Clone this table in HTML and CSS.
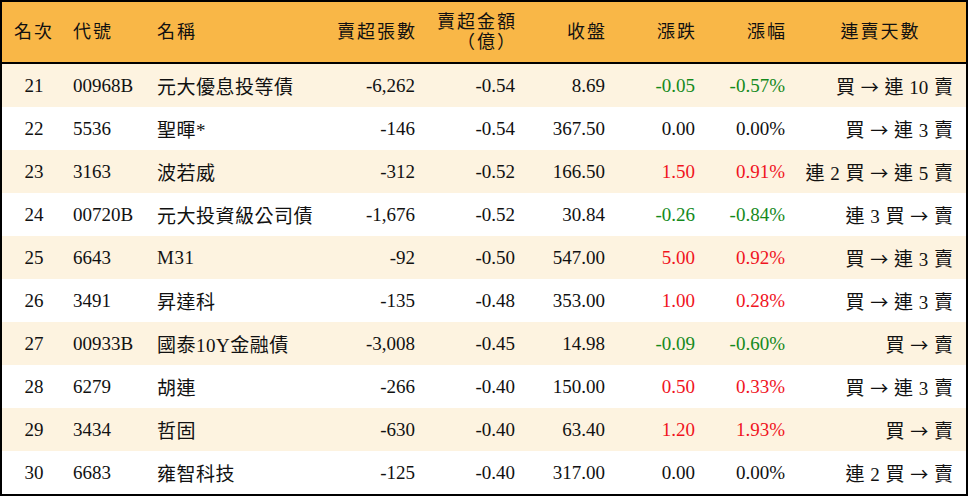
FILE: index.html
```html
<!DOCTYPE html>
<html lang="zh-Hant">
<head>
<meta charset="utf-8">
<link rel="stylesheet" href="styles.css">
</head>
<body>
<table class="tbl">
<colgroup>
<col class="c1"><col class="c2"><col class="c3"><col class="c4"><col class="c5"><col class="c6"><col class="c7"><col class="c8"><col class="c9">
</colgroup>
<thead>
<tr>
<th class="ctr">名次</th><th class="lft">代號</th><th class="lft">名稱</th><th class="rgt">賣超張數</th><th class="rgt">賣超金額<br>（億）</th><th class="rgt">收盤</th><th class="rgt">漲跌</th><th class="rgt">漲幅</th><th class="ctr">連賣天數</th>
</tr>
</thead>
<tbody>
<tr class="odd"><td class="ctr">21</td><td class="lft">00968B</td><td class="lft name">元大優息投等債</td><td class="rgt">-6,262</td><td class="rgt">-0.54</td><td class="rgt">8.69</td><td class="rgt dn">-0.05</td><td class="rgt dn">-0.57%</td><td class="rgt days">買 <span class="arr">→</span> 連 10 賣</td></tr>
<tr><td class="ctr">22</td><td class="lft">5536</td><td class="lft name">聖暉*</td><td class="rgt">-146</td><td class="rgt">-0.54</td><td class="rgt">367.50</td><td class="rgt">0.00</td><td class="rgt">0.00%</td><td class="rgt days">買 <span class="arr">→</span> 連 3 賣</td></tr>
<tr class="odd"><td class="ctr">23</td><td class="lft">3163</td><td class="lft name">波若威</td><td class="rgt">-312</td><td class="rgt">-0.52</td><td class="rgt">166.50</td><td class="rgt up">1.50</td><td class="rgt up">0.91%</td><td class="rgt days">連 2 買 <span class="arr">→</span> 連 5 賣</td></tr>
<tr><td class="ctr">24</td><td class="lft">00720B</td><td class="lft name">元大投資級公司債</td><td class="rgt">-1,676</td><td class="rgt">-0.52</td><td class="rgt">30.84</td><td class="rgt dn">-0.26</td><td class="rgt dn">-0.84%</td><td class="rgt days">連 3 買 <span class="arr">→</span> 賣</td></tr>
<tr class="odd"><td class="ctr">25</td><td class="lft">6643</td><td class="lft name">M31</td><td class="rgt">-92</td><td class="rgt">-0.50</td><td class="rgt">547.00</td><td class="rgt up">5.00</td><td class="rgt up">0.92%</td><td class="rgt days">買 <span class="arr">→</span> 連 3 賣</td></tr>
<tr><td class="ctr">26</td><td class="lft">3491</td><td class="lft name">昇達科</td><td class="rgt">-135</td><td class="rgt">-0.48</td><td class="rgt">353.00</td><td class="rgt up">1.00</td><td class="rgt up">0.28%</td><td class="rgt days">買 <span class="arr">→</span> 連 3 賣</td></tr>
<tr class="odd"><td class="ctr">27</td><td class="lft">00933B</td><td class="lft name">國泰10Y金融債</td><td class="rgt">-3,008</td><td class="rgt">-0.45</td><td class="rgt">14.98</td><td class="rgt dn">-0.09</td><td class="rgt dn">-0.60%</td><td class="rgt days">買 <span class="arr">→</span> 賣</td></tr>
<tr><td class="ctr">28</td><td class="lft">6279</td><td class="lft name">胡連</td><td class="rgt">-266</td><td class="rgt">-0.40</td><td class="rgt">150.00</td><td class="rgt up">0.50</td><td class="rgt up">0.33%</td><td class="rgt days">買 <span class="arr">→</span> 連 3 賣</td></tr>
<tr class="odd"><td class="ctr">29</td><td class="lft">3434</td><td class="lft name">哲固</td><td class="rgt">-630</td><td class="rgt">-0.40</td><td class="rgt">63.40</td><td class="rgt up">1.20</td><td class="rgt up">1.93%</td><td class="rgt days">買 <span class="arr">→</span> 賣</td></tr>
<tr><td class="ctr">30</td><td class="lft">6683</td><td class="lft name">雍智科技</td><td class="rgt">-125</td><td class="rgt">-0.40</td><td class="rgt">317.00</td><td class="rgt">0.00</td><td class="rgt">0.00%</td><td class="rgt days">連 2 買 <span class="arr">→</span> 賣</td></tr>
</tbody>
</table>
</body>
</html>
```
FILE: styles.css
```css
html, body {
  margin: 0;
  padding: 0;
  background: #ffffff;
}
.tbl {
  width: 968px;
  table-layout: fixed;
  border-collapse: separate;
  border-spacing: 0;
  border: 2px solid #000;
  font-family: "Liberation Serif", "Noto Sans CJK TC", serif;
  font-size: 19px;
  color: #111;
}
.c1 { width: 64px; }
.c2 { width: 84px; }
.c3 { width: 180px; }
.c4 { width: 95px; }
.c5 { width: 100px; }
.c6 { width: 90px; }
.c7 { width: 90px; }
.c8 { width: 90px; }
.c9 { width: 171px; }
.tbl th {
  background: #f9b747;
  font-weight: normal;
  font-size: 18px;
  height: 60px;
  padding: 0 10px 0 7px;
  border-bottom: 2px solid #000;
  line-height: 20px;
  letter-spacing: 2px;
}
.tbl th.rgt { padding-right: 8px; }
.tbl td {
  height: 43px;
  padding: 0 10px 0 7px;
  white-space: nowrap;
}
.tbl td.name { letter-spacing: 0.5px; }
.tbl tr.odd td {
  background: #fdf3e0;
}
.ctr { text-align: center; }
.lft { text-align: left; }
.rgt { text-align: right; }
.tbl td.days { padding-right: 13px; word-spacing: 1px; }
.arr {
  font-family: "Noto Sans CJK TC", sans-serif;
  font-size: 18px;
}
.tbl th.ctr, .tbl td.ctr { padding: 0; }
.up { color: #f0141e; }
.dn { color: #158a1c; }
```
